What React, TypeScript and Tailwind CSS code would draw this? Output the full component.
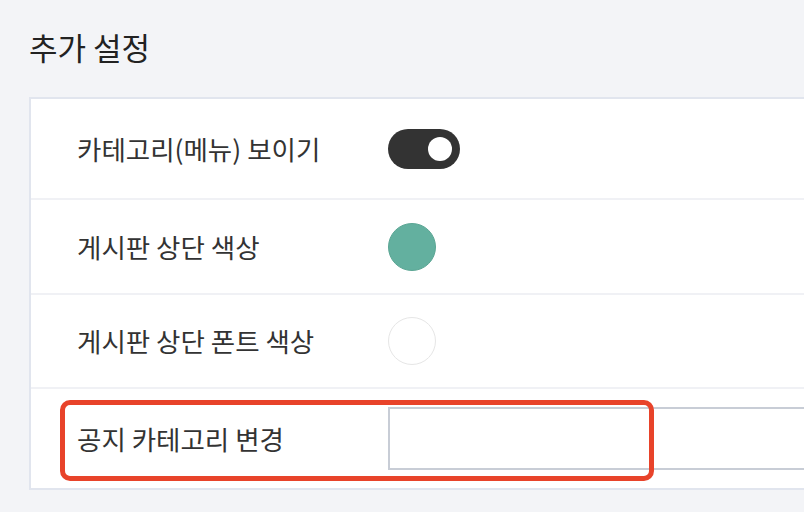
import React from "react";

const font = { fontFamily: '"Noto Sans CJK KR", "Noto Sans", sans-serif' };

const Row: React.FC<{ label: string; className: string; last?: boolean; children: React.ReactNode }> = ({
  label,
  className,
  last,
  children,
}) => (
  <div className={`flex items-center ${className} ${last ? "" : "border-b-2 border-[#f0f1f5]"}`}>
    <div className="w-[357px] shrink-0 pl-[46px] text-[26.5px] leading-[34px] text-[#333]">{label}</div>
    <div className="flex-1 flex items-center">{children}</div>
  </div>
);

export default function App() {
  return (
    <div className="relative w-[804px] h-[512px] overflow-hidden bg-[#f3f4f7]" style={font}>
      <div className="pl-[29px] pt-[26px]">
        {/* 제목 */}
        <h1 className="text-[31px] leading-[42px] text-[#222]">추가 설정</h1>

        {/* 설정 카드 */}
        <div className="mt-[29px] w-[860px] bg-white border-2 border-[#e1e5ee]">
          <Row label="카테고리(메뉴) 보이기" className="h-[101px]">
            <div className="w-[72px] h-[40px] rounded-full bg-[#333] flex items-center justify-end pr-[8px]">
              <div className="w-[24px] h-[24px] rounded-full bg-white" />
            </div>
          </Row>
          <Row label="게시판 상단 색상" className="h-[95px]">
            <div className="w-[48px] h-[48px] rounded-full bg-[#63b09f] border border-[#5ba694]" />
          </Row>
          <Row label="게시판 상단 폰트 색상" className="h-[94px]">
            <div className="w-[48px] h-[48px] rounded-full bg-white border border-[#e6e6e6]" />
          </Row>
          <Row label="공지 카테고리 변경" className="h-[99px]" last>
            <input type="text" className="w-[480px] h-[63px] border-2 border-[#c8cdd6] bg-white outline-none" />
          </Row>
        </div>
      </div>

      {/* 강조 표시 */}
      <div className="absolute left-[60px] top-[400px] w-[594px] h-[81px] rounded-[10px] border-[5px] border-[#e8432a]" />
    </div>
  );
}
